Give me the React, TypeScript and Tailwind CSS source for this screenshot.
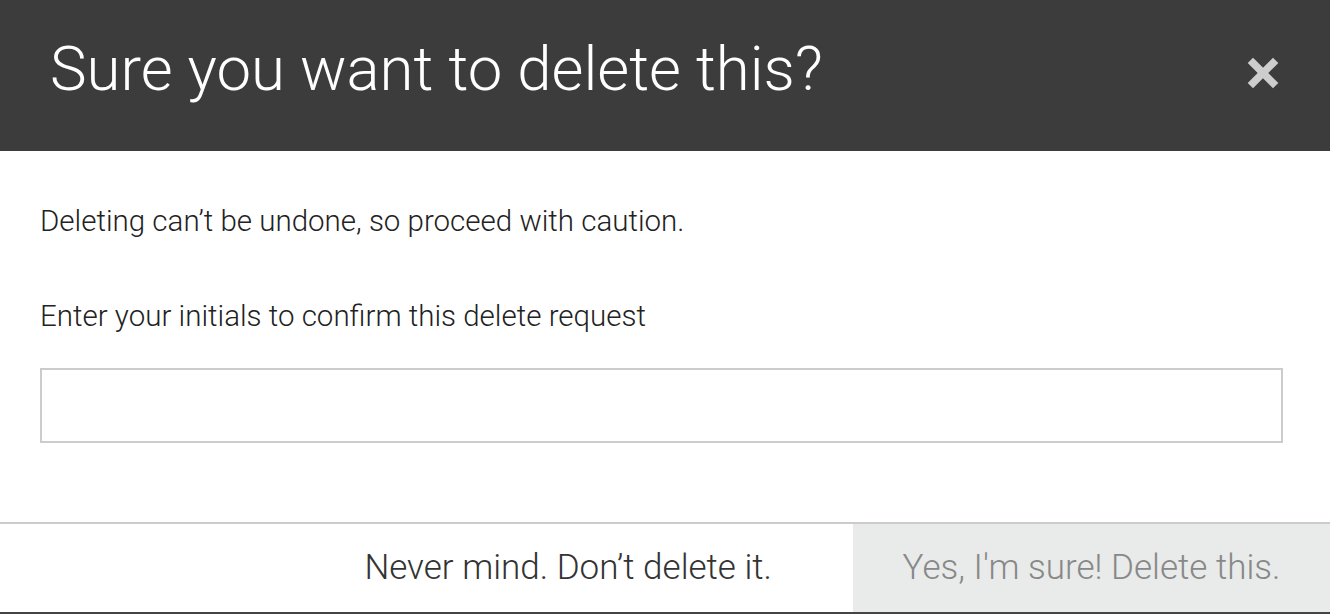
import { X } from "lucide-react";

export default function App() {
  return (
    <div className="w-[1330px] h-[614px] bg-white flex flex-col font-['Roboto',sans-serif] overflow-hidden">
      <div className="h-[151px] shrink-0 bg-[#3c3c3c] flex items-center justify-between pl-[50px] pr-[47px]">
        <h1 className="text-[61.7px] font-light text-white leading-none -mt-[12px]">Sure you want to delete this?</h1>
        <button className="text-[#cdcdcd] -mt-[6px]">
          <X size={40} strokeWidth={4.5} strokeLinecap="square" />
        </button>
      </div>

      <div className="flex-1 pl-[40px] pr-[47px] pt-[50px]">
        <p className="text-[29.5px] font-light text-[#222] leading-[40px]">Deleting can’t be undone, so proceed with caution.</p>
        <p className="text-[29.5px] font-light text-[#222] leading-[40px] mt-[55px]">Enter your initials to confirm this delete request</p>
        <input className="mt-[32px] w-full h-[75px] border-2 border-[#cccccc] outline-none px-3 text-[26px]" />
      </div>

      <div className="h-[92px] shrink-0 border-t-2 border-[#cccccc] border-b-2 border-b-[#444] flex">
        <button className="flex-1 flex items-center justify-end pr-[81px] text-[35px] font-light text-[#333]">
          Never mind. Don’t delete it.
        </button>
        <button className="w-[477px] bg-[#e9eaea] flex items-center justify-center text-[35px] font-light text-[#888]">
          Yes, I'm sure! Delete this.
        </button>
      </div>
    </div>
  );
}
